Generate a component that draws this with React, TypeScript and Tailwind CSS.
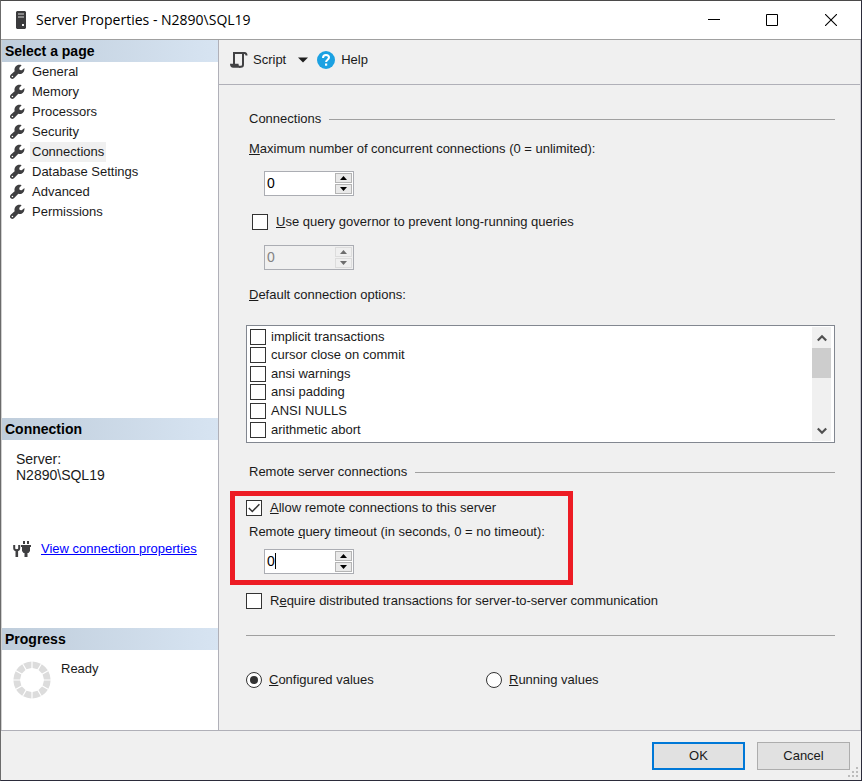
import React, { useState } from 'react';

const PAGES = ['General', 'Memory', 'Processors', 'Security', 'Connections', 'Database Settings', 'Advanced', 'Permissions'];

const OPTIONS = ['implicit transactions', 'cursor close on commit', 'ansi warnings', 'ansi padding', 'ANSI NULLS', 'arithmetic abort'];

function ServerIcon() {
  return (
    <svg width="12" height="18" viewBox="0 0 12 18" className="shrink-0" aria-hidden="true">
      <path d="M2 0h8l1 1v16l-1 1H2l-1-1V1z" fill="#3a3a3c" />
      <path d="M3 3h6M3 6h6" stroke="#d8d8d8" strokeWidth="1.2" />
      <rect x="7" y="13" width="2" height="2" fill="#f0f0f0" />
    </svg>
  );
}

function WrenchIcon() {
  return (
    <svg width="16" height="16" viewBox="0 0 16 16" className="shrink-0" aria-hidden="true">
      <path d="M12.6 1.2 10.2 3.9l.5 2 2 .4 2.700-2.200c.4 2.600-.7 4.800-2.800 5.700-1.200.4-2.300.4-3.300 0L5.700 13.600c-1.100 1.400-2.700 1.700-3.900.7-1.200-1.100-1.100-2.800.2-3.900L5.600 7.200C5 4.700 6 2.300 8.200 1.300c1.400-.6 3-.6 4.400-.1z" fill="#3f3f41" />
      <circle cx="3.400" cy="12.500" r="0.8" fill="#fff" />
    </svg>
  );
}

function ScriptIcon() {
  return (
    <svg width="18" height="18" viewBox="0 0 18 18" className="shrink-0" aria-hidden="true">
      <path d="M4 13V2h10.500c1.300 0 2 .8 2 2.500" fill="none" stroke="#414143" strokeWidth="2" />
      <path d="M13 2v11.500c0 1.400-.7 2.200-2 2.200H9" fill="none" stroke="#414143" strokeWidth="2" />
      <path d="M0 12.700h8.500c0 2 .8 3.300 2.500 4H3.200c-2 0-3.200-1.600-3.200-4z" fill="#414143" />
    </svg>
  );
}

function HelpIcon() {
  return (
    <svg width="18" height="18" viewBox="0 0 18 18" className="shrink-0" aria-hidden="true">
      <circle cx="9" cy="9" r="9" fill="#1ba1e2" />
      <path d="M6 6.900C6 5 7.200 4 9 4s3 1 3 2.600c0 2-2.900 2.200-2.900 4.300" fill="none" stroke="#fff" strokeWidth="2" />
      <rect x="8" y="12.500" width="2.200" height="2.200" fill="#fff" />
    </svg>
  );
}

function PlugIcon() {
  return (
    <svg width="18" height="18" viewBox="0 0 18 18" className="shrink-0" aria-hidden="true">
      <path d="M1.200 5v3.200c0 1.300 1 2 2.500 2s2.500-.7 2.500-2V5" fill="none" stroke="#3f3f41" strokeWidth="2" />
      <path d="M2.500 9.500h2.600V17H2.500z" fill="#3f3f41" />
      <path d="M10 1h2v3h-2zM14 1h2v3h-2zM8 5h10v2h-1v4l-1.500 2H14.500v4h-3v-4h-1L9 11V7H8z" fill="#3f3f41" />
    </svg>
  );
}

function Spinner() {
  const angles = [15, 45, 75, 105, 135, 165, 195, 225, 255, 285, 315, 345];
  return (
    <svg width="38" height="38" viewBox="0 0 38 38" className="shrink-0" aria-hidden="true">
      {angles.map((a) => (
        <path key={a} d="M14.700 .9Q19-.1 23.300 .9L21.500 7.300h-5z" fill="#dcdcdc" transform={`rotate(${a} 19 19)`} />
      ))}
    </svg>
  );
}

function SectionHeader({ title }: { title: string }) {
  return (
    <h2 className="h-[22px] bg-linear-to-r from-[#bfcddb] to-[#d7e4f2] pl-[3px] text-sm/[22px] font-bold text-black">{title}</h2>
  );
}

function GroupTitle({ title }: { title: string }) {
  return (
    <div className="flex h-5 items-center gap-2 pl-[3px]">
      <h3>{title}</h3>
      <div className="h-px grow bg-[#a0a0a0]" />
    </div>
  );
}

interface CheckProps {
  id: string;
  checked?: boolean;
  className: string;
  children: React.ReactNode;
}

function Check({ id, checked = false, className, children }: CheckProps) {
  const [on, setOn] = useState(checked);
  return (
    <div className={`flex items-center ${className}`}>
      <span className="relative flex">
        <input
          id={id}
          type="checkbox"
          checked={on}
          onChange={() => setOn(!on)}
          className="size-4 appearance-none border border-[#333] bg-white"
        />
        {on && (
          <svg width="16" height="16" viewBox="0 0 16 16" className="pointer-events-none absolute inset-0" aria-hidden="true">
            <path d="M2.800 8 6.300 11.500 13.400 4.200" fill="none" stroke="#333" strokeWidth="1.500" />
          </svg>
        )}
      </span>
      <label htmlFor={id}>{children}</label>
    </div>
  );
}

interface SpinBoxProps {
  id: string;
  label: string;
  disabled?: boolean;
  caret?: boolean;
}

function SpinBox({ id, label, disabled = false, caret = false }: SpinBoxProps) {
  const [value, setValue] = useState('0');
  const step = (n: number) => setValue(String(Math.max(0, Number(value) + n)));
  const arrow = disabled ? '#6d6d6d' : '#000';

  return (
    <div className={`relative flex h-[25px] w-[90px] border border-[#abadb3] p-px ${disabled ? 'bg-[#f0f0f0]' : 'bg-white'}`}>
      <input
        id={id}
        aria-label={label}
        value={value}
        disabled={disabled}
        onChange={(e) => setValue(e.target.value)}
        className="h-5 w-0 grow pl-px text-sm text-black outline-none disabled:text-[#838383]"
      />
      {caret && <span className="absolute left-[10px] top-[3px] h-4 w-px bg-black" />}
      <div className="flex w-[17px] flex-col gap-px">
        <button
          aria-label="Increase"
          disabled={disabled}
          onClick={() => step(1)}
          className="flex grow items-center justify-center border border-[#b4b4b4] bg-[#e9e9e9] disabled:border-[#dcdcdc] disabled:bg-[#efefef]"
        >
          <svg width="7" height="4" viewBox="0 0 7 4"><path d="M0 4 3.500 0 7 4z" fill={arrow} /></svg>
        </button>
        <button
          aria-label="Decrease"
          disabled={disabled}
          onClick={() => step(-1)}
          className="flex grow items-center justify-center border border-[#b4b4b4] bg-[#e9e9e9] disabled:border-[#dcdcdc] disabled:bg-[#efefef]"
        >
          <svg width="7" height="4" viewBox="0 0 7 4"><path d="M0 0 3.500 4 7 0z" fill={arrow} /></svg>
        </button>
      </div>
    </div>
  );
}

function Sidebar() {
  const [page, setPage] = useState('Connections');
  return (
    <aside className="flex w-[218px] shrink-0 flex-col border-x border-l-[#d0d0d0] border-r-[#b0b0b8] bg-white">
      <SectionHeader title="Select a page" />
      <ul className="grow pl-[7px]">
        {PAGES.map((p) => (
          <li key={p} className="flex h-5 items-center gap-[5px]">
            <WrenchIcon />
            <button onClick={() => setPage(p)} className={`px-[2px] ${p === page ? 'bg-[#f0f0f0]' : ''}`}>{p}</button>
          </li>
        ))}
      </ul>

      <section className="h-[210px]">
        <SectionHeader title="Connection" />
        <div className="mt-[11px] pl-[14px] text-sm/4">
          <p>Server:</p>
          <p>N2890\SQL19</p>
        </div>
        <div className="mt-14 flex h-5 items-center gap-[10px] pl-[11px]">
          <PlugIcon />
          <a href="#" className="text-[#0000ff] underline">View connection properties</a>
        </div>
      </section>

      <section className="h-[102px]">
        <SectionHeader title="Progress" />
        <div className="flex gap-[10px] pl-[11px] pt-[9px]">
          <div className="pt-[2px]"><Spinner /></div>
          <p>Ready</p>
        </div>
      </section>
    </aside>
  );
}

function Radio({ id, checked, onChange, children }: { id: string; checked: boolean; onChange: () => void; children: React.ReactNode }) {
  return (
    <div className="flex w-60 items-center gap-[7px]">
      <input
        id={id}
        type="radio"
        name="values"
        checked={checked}
        onChange={onChange}
        className="grid size-4 appearance-none place-items-center rounded-full border border-[#333] bg-white before:size-2 before:rounded-full checked:before:bg-[#333]"
      />
      <label htmlFor={id}>{children}</label>
    </div>
  );
}

export default function App() {
  const [values, setValues] = useState('configured');

  return (
    <div className="flex min-h-screen flex-col border border-b-[#2b2b3a] border-l-[#6b6b6b] border-r-[#2b2b3a] border-t-[#4b4a4a] bg-[#f0f0f0] font-['Liberation_Sans',Arial,sans-serif] text-[13px]/5 text-[#1a1a1a]">
      <header className="flex h-[39px] items-center border-b border-[#a0a0a0] bg-white pl-[14px]">
        <ServerIcon />
        <h1 className="grow pl-[9px] font-['Open_Sans','Segoe_UI',sans-serif] text-sm text-black">Server Properties - N2890\SQL19</h1>
        <button aria-label="Minimize" className="flex h-full w-[58px] items-center justify-center">
          <svg width="12" height="12" viewBox="0 0 12 12"><path d="M0 5.500h12" stroke="#000" /></svg>
        </button>
        <button aria-label="Maximize" className="flex h-full w-[58px] items-center justify-center">
          <svg width="12" height="12" viewBox="0 0 12 12"><path d="M.5.5h11v11H.5z" fill="none" stroke="#000" /></svg>
        </button>
        <button aria-label="Close" className="flex h-full w-[60px] items-center justify-center">
          <svg width="12" height="12" viewBox="0 0 12 12"><path d="M0 0l12 12M12 0 0 12" stroke="#000" strokeWidth="1.100" /></svg>
        </button>
      </header>

      <div className="flex grow border-b border-[#b0b0b8]">
        <Sidebar />

        <main className="grow border-r border-[#c4c4cc]">
          <div className="flex h-[45px] items-center border-b border-[#b0b0b8] pb-1 pl-[11px]">
            <button className="flex items-center gap-[5px]">
              <ScriptIcon />
              Script
            </button>
            <button aria-label="Script options" className="ml-3">
              <svg width="10" height="6" viewBox="0 0 10 6"><path d="M0 .5h10L5 5.500z" fill="#1e1e1e" /></svg>
            </button>
            <button className="ml-[9px] flex items-center gap-[6px]">
              <HelpIcon />
              Help
            </button>
          </div>

          <div className="pb-10 pl-[27px] pr-[25px] pt-6">
            <GroupTitle title="Connections" />
            <label htmlFor="max" className="mt-[10px] block pl-[3px]"><u>M</u>aximum number of concurrent connections (0 = unlimited):</label>
            <div className="mt-3 pl-[18px]"><SpinBox id="max" label="Maximum number of concurrent connections" /></div>
            <Check id="governor" className="mt-4 gap-2 pl-[6px]"><u>U</u>se query governor to prevent long-running queries</Check>
            <div className="mt-[13px] pl-[18px]"><SpinBox id="cost" label="Query governor limit" disabled /></div>

            <p className="mt-[15px] pl-[3px]"><u>D</u>efault connection options:</p>
            <div className="mt-5 flex border border-[#828790] bg-white py-px pl-px pr-[3px]">
              <div className="mb-[2px] grid h-28 grow auto-rows-fr pl-[2px]">
                {OPTIONS.map((o) => (
                  <Check key={o} id={o} className="h-[19px] gap-[5px]">{o}</Check>
                ))}
              </div>
              <div className="flex w-[19px] flex-col items-center bg-[#f0f0f0]">
                <button aria-label="Scroll up" className="flex h-[21px] w-full items-center justify-center">
                  <svg width="10" height="8" viewBox="0 0 10 8"><path d="M.8 6.500 5 2.300l4.200 4.200" fill="none" stroke="#505050" strokeWidth="2.200" /></svg>
                </button>
                <div className="h-[30px] w-full bg-[#cdcdcd]" />
                <button aria-label="Scroll down" className="mt-auto flex h-[21px] w-full items-center justify-center">
                  <svg width="10" height="8" viewBox="0 0 10 8"><path d="M.8 1.500 5 5.700l4.200-4.200" fill="none" stroke="#505050" strokeWidth="2.200" /></svg>
                </button>
              </div>
            </div>

            <div className="mt-[19px]"><GroupTitle title="Remote server connections" /></div>
            <div className="-ml-4 mt-[9px] w-[343px] border-5 border-[#ed1c24] pb-[6px] pl-[11px] pt-[2px]">
              <Check id="remote" checked className="gap-2"><u>A</u>llow remote connections to this server</Check>
              <label htmlFor="timeout" className="mt-1 block pl-[3px]">Remote <u>q</u>uery timeout (in seconds, 0 = no timeout):</label>
              <div className="mt-[7px] pl-[18px]"><SpinBox id="timeout" label="Remote query timeout" caret /></div>
            </div>
            <Check id="distributed" className="mt-[6px] gap-2">R<u>e</u>quire distributed transactions for server-to-server communication</Check>

            <hr className="mt-6 border-[#a0a0a0]" />
            <div className="mt-[34px] flex">
              <Radio id="configured" checked={values === 'configured'} onChange={() => setValues('configured')}><u>C</u>onfigured values</Radio>
              <Radio id="running" checked={values === 'running'} onChange={() => setValues('running')}><u>R</u>unning values</Radio>
            </div>
          </div>
        </main>
      </div>

      <footer className="relative flex h-[49px] items-center justify-end gap-3 pr-[11px]">
        <button className="h-7 w-[93px] border-2 border-[#0078d7] bg-[#e1e1e1]">OK</button>
        <button className="h-7 w-[93px] border border-[#adadad] bg-[#e1e1e1]">Cancel</button>
        <svg width="11" height="11" viewBox="0 0 11 11" className="absolute bottom-[2px] right-[2px]" aria-hidden="true">
          <path d="M8 0h2v2H8zM4 4h2v2H4zM8 4h2v2H8zM0 8h2v2H0zM4 8h2v2H4zM8 8h2v2H8z" fill="#bcbcbc" />
        </svg>
      </footer>
    </div>
  );
}
